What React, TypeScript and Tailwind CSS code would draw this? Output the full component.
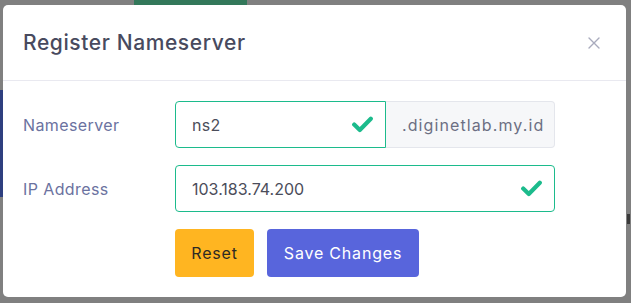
import React from "react";

function CheckIcon() {
  return (
    <svg width="21" height="17" viewBox="0 0 21 17" fill="none" className="shrink-0">
      <path
        d="M2.2 8.6 L7.8 14 L18.8 2.8"
        stroke="#1cbb8c"
        strokeWidth="4.2"
        strokeLinecap="round"
        strokeLinejoin="round"
      />
    </svg>
  );
}

function CloseIcon() {
  return (
    <svg width="12" height="12" viewBox="0 0 12 12" fill="none">
      <path d="M1 1 L11 11 M11 1 L1 11" stroke="#a9abbd" strokeWidth="1.4" strokeLinecap="round" />
    </svg>
  );
}

export default function App() {
  return (
    <div
      className="relative w-[631px] h-[303px] overflow-hidden bg-[#808080]"
      style={{ fontFamily: "Inter, 'Open Sans', sans-serif" }}
    >
      {/* page behind the backdrop */}
      <div className="absolute left-[134px] top-0 w-[113px] h-[6px] bg-[#33785a]" />
      <div className="absolute left-0 top-[90px] w-[3px] h-[107px] bg-[#2e3f7f]" />
      <div className="absolute left-[627px] top-[214px] w-[3px] h-[10px] bg-[#3a3a3a]" />

      {/* Modal */}
      <div className="absolute left-[3px] top-[5px] w-[623px] h-[292px] bg-white rounded-[5px] flex flex-col">
        <div className="h-[76px] px-5 flex items-center justify-between border-b border-[#e9e9f0]">
          <h2 className="text-[21px] font-medium text-[#484a5e] tracking-[0.6px]">Register Nameserver</h2>
          <button className="mr-[6px] mt-[1px]">
            <CloseIcon />
          </button>
        </div>

        <div className="px-5 pt-5 flex flex-col gap-[17px]">
          <div className="flex items-center">
            <label className="w-[152px] text-[16px] tracking-[0.4px] text-[#6b72a0]">Nameserver</label>
            <div className="flex h-[47px] w-[380px]">
              <div className="w-[211px] flex items-center justify-between pl-4 pr-[12px] border border-[#1cbb8c] rounded-l-[4px]">
                <span className="text-[16px] tracking-[0.3px] text-[#4b4d5a]">ns2</span>
                <CheckIcon />
              </div>
              <div className="flex-1 flex items-center pl-4 bg-[#f6f7f9] border border-l-0 border-[#e4e6ec] rounded-r-[4px] text-[16px] tracking-[1.1px] text-[#6c6f83]">
                .diginetlab.my.id
              </div>
            </div>
          </div>

          <div className="flex items-center">
            <label className="w-[152px] text-[16px] tracking-[0.4px] text-[#6b72a0]">IP Address</label>
            <div className="w-[380px] h-[47px] flex items-center justify-between pl-4 pr-[12px] border border-[#1cbb8c] rounded-[4px]">
              <span className="text-[16px] text-[#4b4d5a]">103.183.74.200</span>
              <CheckIcon />
            </div>
          </div>

          <div className="flex items-center pl-[152px] gap-[13px]">
            <button className="h-[48px] w-[79px] rounded-[4px] bg-[#ffb521] text-[16px] tracking-[0.8px] text-[#2d2a24]">
              Reset
            </button>
            <button className="h-[48px] w-[152px] rounded-[4px] bg-[#5865dc] text-[16px] tracking-[0.8px] text-white">
              Save Changes
            </button>
          </div>
        </div>
      </div>
    </div>
  );
}
